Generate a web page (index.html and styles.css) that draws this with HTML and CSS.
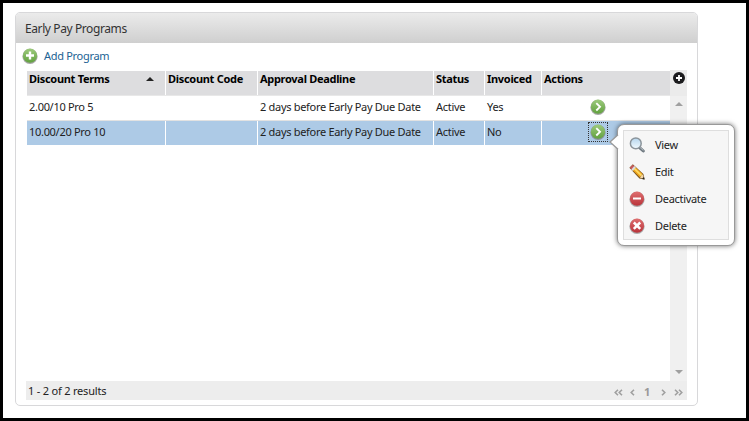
FILE: index.html
```html
<!DOCTYPE html>
<html lang="en">
<head>
<meta charset="utf-8">
<title>Early Pay Programs</title>
<link rel="stylesheet" href="styles.css">
</head>
<body>
<svg class="defs" width="0" height="0" aria-hidden="true">
  <defs>
    <linearGradient id="green" x1="0" y1="0" x2="0" y2="1"><stop offset="0" stop-color="#9dca7d"/><stop offset="1" stop-color="#61a13e"/></linearGradient>
    <linearGradient id="red" x1="0" y1="0" x2="0" y2="1"><stop offset="0" stop-color="#df6f70"/><stop offset="1" stop-color="#b9333a"/></linearGradient>
    <linearGradient id="lens" x1="0" y1="0" x2="0" y2="1"><stop offset="0" stop-color="#b5d5ed"/><stop offset="1" stop-color="#f2faff"/></linearGradient>
    <symbol id="go" viewBox="0 0 16 16"><circle cx="8" cy="8.4" r="7.6" fill="#777" opacity=".65"/><circle cx="8" cy="7.7" r="7.1" fill="url(#green)"/><path d="M6.3 4.1 10 7.8 6.3 11.5" fill="none" stroke="#fff" stroke-width="1.9"/></symbol>
  </defs>
</svg>
<section class="panel">
  <h1 class="title">Early Pay Programs</h1>
  <div class="toolbar">
    <svg width="16" height="16" viewBox="0 0 16 16"><circle cx="8" cy="8.4" r="7.6" fill="#777" opacity=".65"/><circle cx="8" cy="7.7" r="7.1" fill="url(#green)"/><path d="M8 3.5v8M4 7.5h8" stroke="#fff" stroke-width="2.4"/></svg>
    <a class="add">Add Program</a>
  </div>
  <div class="grid-area">
    <div class="table">
      <div class="row head">
        <div class="cell sorted"><span>Discount Terms</span><i class="up dark"></i></div>
        <div class="cell">Discount Code</div>
        <div class="cell">Approval Deadline</div>
        <div class="cell">Status</div>
        <div class="cell">Invoiced</div>
        <div class="cell">Actions</div>
      </div>
      <div class="row">
        <div class="cell">2.00/10 Pro 5</div><div class="cell"></div><div class="cell">2 days before Early Pay Due Date</div><div class="cell">Active</div><div class="cell">Yes</div>
        <div class="cell action"><span class="go"><svg width="16" height="16"><use href="#go"/></svg></span></div>
      </div>
      <div class="row selected">
        <div class="cell">10.00/20 Pro 10</div><div class="cell"></div><div class="cell">2 days before Early Pay Due Date</div><div class="cell">Active</div><div class="cell">No</div>
        <div class="cell action"><span class="go focus"><svg width="16" height="16"><use href="#go"/></svg></span></div>
      </div>
    </div>
    <div class="side">
      <div class="columns"><svg width="12" height="12" viewBox="0 0 12 12"><circle cx="6" cy="6" r="6" fill="#1c1c1e"/><path d="M6 3v6M3 6h6" stroke="#fff" stroke-width="1.8"/></svg></div>
      <div class="scroll"><i class="up"></i><i class="down"></i></div>
    </div>
  </div>
  <div class="footer">
    <span class="results">1 - 2 of 2 results</span>
    <div class="pager">
      <svg width="9" height="7" viewBox="0 0 9 7"><path d="M4 .7 1.2 3.5 4 6.3M8 .7 5.2 3.5 8 6.3"/></svg>
      <svg class="prev" width="5" height="7" viewBox="0 0 5 7"><path d="M4 .7 1.2 3.5 4 6.3"/></svg>
      <b>1</b>
      <svg class="next" width="5" height="7" viewBox="0 0 5 7"><path d="M1 .7 3.8 3.5 1 6.3"/></svg>
      <svg width="9" height="7" viewBox="0 0 9 7"><path d="M1 .7 3.8 3.5 1 6.3M5 .7 7.8 3.5 5 6.3"/></svg>
    </div>
  </div>
</section>
<div class="popup">
  <svg class="tip" width="10" height="16" viewBox="0 0 10 16"><path d="M10 0 1 8l9 8z" fill="#fff"/><path d="M9 .7 1 8l8 7.3" fill="none" stroke="#999" stroke-width="1.3"/></svg>
  <ul class="menu">
    <li><svg width="16" height="16" viewBox="0 0 16 16"><path d="m10.3 10.3 4 3.7" stroke="#707a82" stroke-width="3" stroke-linecap="round"/><path d="m11 10.4 3.4 3.1" stroke="#bac2c7"/><circle cx="6.8" cy="6.4" r="5.4" fill="url(#lens)" stroke="#8b949b" stroke-width="1.5"/></svg><span>View</span></li>
    <li><svg width="16" height="16" viewBox="0 0 16 16"><path d="M.4 3.8 3.8.3 14.4 10l1.3 5.6-5.3-1.1z" fill="#79551f"/><path d="m3.7 6.3 2.8-3.1 7.1 6.9-2.8 3.2z" fill="#efa51e"/><path d="m5.4 4.6 7.2 7" stroke="#ffdc64" stroke-width="1.6"/><path d="M.8 3.8 3.7.7 5.5 2.2 2.5 5.6z" fill="#c8585c"/><path d="m2.3 5.4 3-3.3 1.5 1.4-3 3.4z" fill="#ddd"/><path d="m10.8 13.5 3-3.3.9 3.2-1.1 1z" fill="#f3d5a6"/><path d="m13 14.9 1.9-1.8.7 2.4z" fill="#222"/></svg><span>Edit</span></li>
    <li><svg width="16" height="16" viewBox="0 0 16 16"><circle cx="8" cy="8.4" r="7.6" fill="#777" opacity=".6"/><circle cx="8" cy="7.7" r="7.1" fill="url(#red)"/><path d="M4 7.5h8" stroke="#fff" stroke-width="2"/></svg><span>Deactivate</span></li>
    <li><svg width="16" height="16" viewBox="0 0 16 16"><circle cx="8" cy="8.4" r="7.6" fill="#777" opacity=".6"/><circle cx="8" cy="7.7" r="7.1" fill="url(#red)"/><path d="m4.8 4.5 6.4 6.4M11.2 4.5l-6.4 6.4" stroke="#fff" stroke-width="2.5"/></svg><span>Delete</span></li>
  </ul>
</div>
</body>
</html>
```
FILE: styles.css
```css
* { box-sizing: border-box; }
body {
  position: relative;
  margin: 0;
  width: 749px;
  height: 421px;
  border: 3px solid #000;
  padding: 9px 0 0 12px;
  background: #fff;
  color: #222;
  font: 11px/16px "Noto Sans", sans-serif;
  letter-spacing: -.3px;
  overflow: hidden;
}
svg { display: block; flex: none; }
.defs { position: absolute; }
.panel {
  width: 683px;
  height: 394px;
  border: 1px solid #d8d8da;
  border-radius: 5px;
  overflow: hidden;
}
.title {
  margin: 0;
  height: 30px;
  padding: 0 9px;
  background: linear-gradient(#ebebeb, #cfcfcf);
  color: #333;
  font-size: 12px;
  font-weight: 400;
  line-height: 32px;
  letter-spacing: -.4px;
}
.toolbar {
  display: flex;
  align-items: center;
  gap: 6px;
  height: 27px;
  padding: 0 0 1px 6px;
}
.add { color: #226293; }
.grid-area {
  display: flex;
  height: 311px;
  margin-left: 11px;
}
.table { width: 643px; padding-top: 1px; }
.row {
  display: grid;
  grid-template-columns: 138px 91px 175px 50px 56px 128px;
  column-gap: 1px;
  height: 25px;
}
.cell {
  height: 24px;
  padding: 3px 0 0 2px;
  white-space: nowrap;
}
.head { height: 25px; border-bottom: 1px solid #e8e8e8; font-weight: 700; color: #000; }
.head .cell { background: #dddddf; padding-top: 0; }
.row:nth-child(2) { border-bottom: 1px solid #e2e2e2; }
.selected .cell { background: #adcae6; }
.head .sorted { display: flex; justify-content: space-between; padding-right: 11px; }
.up, .down {
  width: 0;
  height: 0;
  border: 4px solid transparent;
  border-top-width: 0;
  border-bottom: 4px solid #a0a0a0;
}
.down { border-top: 4px solid #a0a0a0; border-bottom-width: 0; }
.dark { border-bottom-color: #222; margin-top: 6px; }
.action { display: flex; justify-content: flex-start; padding: 1px 0 0 46px; }
.go { display: grid; place-items: center; width: 20px; height: 20px; }
.focus { outline: 1px dotted #333; outline-offset: -1px; }
.side { width: 17px; background: #f0f0f0; }
.columns { height: 26px; padding: 2px 0 0 3px; background: #ebebeb; }
.scroll {
  display: flex;
  flex-direction: column;
  justify-content: space-between;
  align-items: center;
  height: 285px;
  padding: 6px 0 7px;
}
.footer {
  display: flex;
  justify-content: space-between;
  align-items: center;
  width: 661px;
  height: 19px;
  margin-left: 10px;
  padding: 0 4px 0 2px;
  background: #ededed;
}
.results { letter-spacing: -.2px; }
.pager { display: flex; align-items: center; color: #999; padding-top: 3px; }
.pager svg { fill: none; stroke: #a0a0a0; stroke-width: 1.6; }
.pager b { margin: 0 11px 0 9px; }
.prev { margin-left: 7px; }
.next { margin-right: 8px; }
.popup {
  position: absolute;
  left: 614px;
  top: 121px;
  width: 118px;
  height: 122px;
  padding: 5px;
  border: 1px solid #999;
  border-radius: 7px;
  background: #fff;
  box-shadow: 0 0 5px rgba(0, 0, 0, .55);
}
.tip { position: absolute; left: -9px; top: 9px; }
.menu {
  height: 110px;
  margin: 0;
  padding: 0 0 0 5px;
  border: 1px solid #dedede;
  background: #f6f6f6;
  list-style: none;
}
.menu li { display: flex; align-items: center; gap: 10px; height: 27px; }
```
